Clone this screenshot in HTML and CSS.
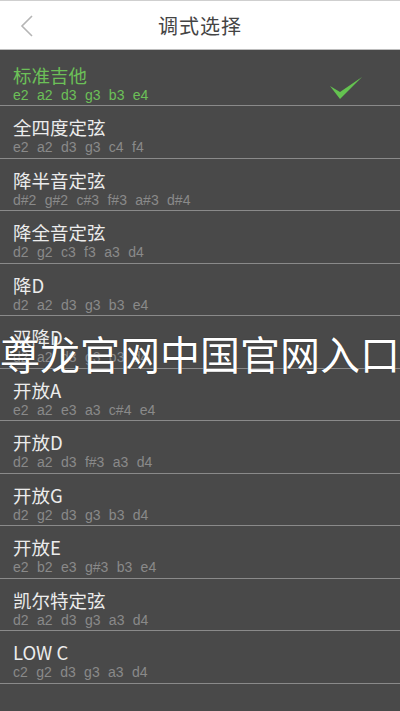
FILE: index.html
```html
<!DOCTYPE html>
<html lang="zh">
<head>
<meta charset="utf-8">
<link rel="stylesheet" href="styles.css">
</head>
<body>
<div class="page">
  <header class="topbar">
    <svg class="back" width="16" height="24" viewBox="0 0 16 24"><path d="M13 2 L3 12 L13 22" fill="none" stroke="#b5b5b5" stroke-width="1.6"/></svg>
    <div class="title">调式选择</div>
  </header>
  <ul class="list">
    <li class="row active">
      <div class="txt"><div class="name">标准吉他</div><div class="notes">e2 a2 d3 g3 b3 e4</div></div>
      <svg class="check" width="34" height="26" viewBox="0 0 34 26"><path d="M1 11 L11 24 L33 2 L11 17 Z" fill="#64c250"/></svg>
    </li>
    <li class="row"><div class="txt"><div class="name">全四度定弦</div><div class="notes">e2 a2 d3 g3 c4 f4</div></div></li>
    <li class="row"><div class="txt"><div class="name">降半音定弦</div><div class="notes">d#2 g#2 c#3 f#3 a#3 d#4</div></div></li>
    <li class="row"><div class="txt"><div class="name">降全音定弦</div><div class="notes">d2 g2 c3 f3 a3 d4</div></div></li>
    <li class="row"><div class="txt"><div class="name">降D</div><div class="notes">d2 a2 d3 g3 b3 e4</div></div></li>
    <li class="row"><div class="txt"><div class="name">双降D</div><div class="notes">d2 a2 d3 g3 b3 d4</div></div></li>
    <li class="row"><div class="txt"><div class="name">开放A</div><div class="notes">e2 a2 e3 a3 c#4 e4</div></div></li>
    <li class="row"><div class="txt"><div class="name">开放D</div><div class="notes">d2 a2 d3 f#3 a3 d4</div></div></li>
    <li class="row"><div class="txt"><div class="name">开放G</div><div class="notes">d2 g2 d3 g3 b3 d4</div></div></li>
    <li class="row"><div class="txt"><div class="name">开放E</div><div class="notes">e2 b2 e3 g#3 b3 e4</div></div></li>
    <li class="row"><div class="txt"><div class="name">凯尔特定弦</div><div class="notes">d2 a2 d3 g3 a3 d4</div></div></li>
    <li class="row"><div class="txt"><div class="name">LOW C</div><div class="notes">c2 g2 d3 g3 a3 d4</div></div></li>
  </ul>
  <div class="overlay">尊龙官网中国官网入口</div>
</div>
</body>
</html>
```
FILE: styles.css
```css
html, body { margin: 0; padding: 0; }
body {
  background: #494949;
  font-family: "Liberation Sans", "Noto Sans CJK SC", sans-serif;
  width: 400px;
  height: 711px;
  overflow: hidden;
}
.page { position: relative; width: 400px; height: 711px; background: #494949; }
.topbar {
  height: 48px;
  background: #fff;
  border-top: 1px solid #cfcfcf;
  border-bottom: 1px solid #bdbdbd;
  display: flex;
  align-items: center;
  justify-content: center;
  position: relative;
}
.back { position: absolute; left: 19px; top: 13px; }
.title {
  font-family: "Noto Sans CJK SC", sans-serif;
  font-size: 20px;
  color: #444;
  letter-spacing: 1px;
}
.list { list-style: none; margin: 0; padding: 2px 0 0 0; }
.row {
  height: 51.5px;
  border-bottom: 1px solid #8a8a8a;
  display: flex;
  align-items: flex-start;
  justify-content: space-between;
  padding: 0 37px 0 13px;
}
.txt { padding-top: 10px; }
.name {
  font-family: "Noto Sans CJK SC", sans-serif;
  font-size: 18.5px;
  line-height: 23px;
  color: #ececec;
}
.notes {
  font-size: 14px;
  line-height: 17px;
  color: #8a8a8a;
  word-spacing: 4.5px;
}
.row.active { height: 53px; }
.row.active .txt { padding-top: 12px; }
.row.active .name, .row.active .notes { color: #6cc058; }
.check { margin-top: 23px; }
.overlay {
  position: absolute;
  left: 0;
  top: 330px;
  width: 400px;
  text-align: center;
  font-family: "Noto Sans CJK SC", sans-serif;
  font-size: 40px;
  line-height: 46px;
  color: #fff;
  white-space: nowrap;
  text-shadow: 0 0 1px #222;
}
```
